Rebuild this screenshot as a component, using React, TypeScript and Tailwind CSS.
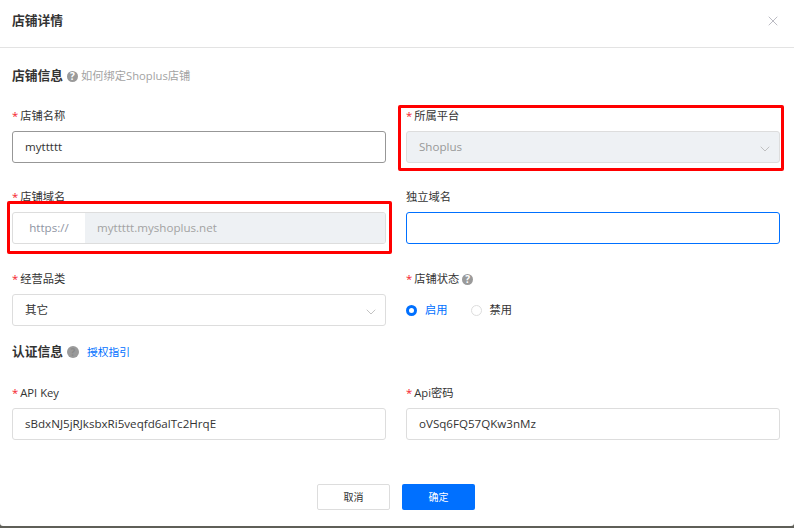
import { ChevronDown, X } from 'lucide-react';

function Req() {
  return <span className="text-[#f5222d] mr-[2px]">*</span>;
}

function Help({ size = 'w-3 h-3', mute = false }: { size?: string; mute?: boolean }) {
  return (
    <span className={`inline-flex items-center justify-center rounded-full bg-[#9a9a9a] text-[10px] font-bold leading-none ${mute ? 'text-[#8a8a8a]' : 'text-white'} ${size}`}>
      ?
    </span>
  );
}

function Field({ label, required = true, className = '', children }: { label: React.ReactNode; required?: boolean; className?: string; children: React.ReactNode }) {
  return (
    <div className={className}>
      <div className="h-[16px] pt-[2px] flex items-center text-[11.25px] leading-4 text-[#333]">
        {required && <Req />}
        {label}
      </div>
      <div className="mt-[8px]">{children}</div>
    </div>
  );
}

function TextBox({ value, className = 'border-[#dddddd]' }: { value?: string; className?: string }) {
  return (
    <div className={`h-8 rounded-[3px] border px-3 flex items-center text-[11.6px] text-[#333] ${className}`}>
      {value}
    </div>
  );
}

function SelectBox({ value, disabled = false }: { value: string; disabled?: boolean }) {
  return (
    <div className={`h-8 rounded-[3px] border border-[#dddddd] px-3 flex items-center justify-between text-[11.6px] ${disabled ? 'bg-[#eef1f4] text-[#999]' : 'text-[#333]'}`}>
      <span>{value}</span>
      <ChevronDown className="w-4 h-4 -mr-[6px] mt-[4px] text-[#b4b4b4]" strokeWidth={1.2} />
    </div>
  );
}

export default function App() {
  return (
    <div
      className="relative w-[794px] h-[528px] bg-[#5f5f58] overflow-hidden"
      style={{ fontFamily: '"Open Sans", "Noto Sans CJK SC", sans-serif' }}
    >
      <div className="h-[526px] bg-white rounded-b-[3px]">
        <div className="h-[48px] border-b border-[#e3e3e3] pl-3 pr-[13px] pb-[5px] flex items-center justify-between">
          <span className="text-[12.75px] font-bold text-[#333]">店铺详情</span>
          <X className="w-4 h-4 text-[#a9a9b4]" strokeWidth={1.2} />
        </div>

        <div className="pl-3 pr-[14px] pt-[19px]">
          <div className="h-[18px] flex items-center">
            <span className="text-[12.75px] font-bold text-[#333]">店铺信息</span>
            <span className="ml-1 flex"><Help size="w-[11px] h-[11px]" /></span>
            <span className="ml-[3px] text-[11.25px] text-[#a3a3a3]">如何绑定Shoplus店铺</span>
          </div>

          <div className="grid grid-cols-2 gap-x-5 gap-y-[25px] mt-[22px]">
            <Field label="店铺名称">
              <TextBox value="myttttt" className="border-[#979797]" />
            </Field>
            <Field label="所属平台">
              <SelectBox value="Shoplus" disabled />
            </Field>
            <Field label="店铺域名">
              <div className="h-8 rounded-[3px] border border-[#dddddd] flex items-center text-[11.6px] overflow-hidden">
                <div className="w-[72px] h-full flex items-center justify-center text-[#8f95a3]">https://</div>
                <div className="flex-1 h-full bg-[#eef1f4] px-3 flex items-center text-[#a3a3a3]">myttttt.myshoplus.net</div>
              </div>
            </Field>
            <Field label="独立域名" required={false}>
              <TextBox className="border-[#0070ff]" />
            </Field>
            <Field label="经营品类" className="mt-px">
              <SelectBox value="其它" />
            </Field>
            <Field className="mt-px" label={<span className="flex items-center">店铺状态<span className="ml-[3px] flex"><Help size="w-[11px] h-[11px]" /></span></span>}>
              <div className="h-8 flex items-center text-[11.25px]">
                <span className="w-[11px] h-[11px] rounded-full border-[3.5px] border-[#0070ff] bg-white" />
                <span className="ml-2 text-[#0070ff]">启用</span>
                <span className="ml-[23px] w-[11px] h-[11px] rounded-full border border-[#dddddd] bg-white" />
                <span className="ml-2 text-[#333]">禁用</span>
              </div>
            </Field>
          </div>

          <div className="h-[18px] flex items-center mt-[17px]">
            <span className="text-[12.75px] font-bold text-[#333]">认证信息</span>
            <span className="ml-1 flex"><Help size="w-[12px] h-[12px]" mute /></span>
            <span className="ml-2 text-[10.75px] text-[#0070ff]">授权指引</span>
          </div>

          <div className="grid grid-cols-2 gap-x-5 mt-[23px]">
            <Field label="API Key">
              <TextBox value="sBdxNJ5jRJksbxRi5veqfd6alTc2HrqE" />
            </Field>
            <Field label="Api密码">
              <TextBox value="oVSq6FQ57QKw3nMz" />
            </Field>
          </div>

          <div className="flex justify-center gap-3 mt-[44px]">
            <button className="w-[73px] h-[26px] rounded-[2px] border border-[#dddddd] text-[10px] text-[#333] bg-white">取消</button>
            <button className="w-[73px] h-[26px] rounded-[2px] bg-[#0070ff] text-[10px] text-white">确定</button>
          </div>
        </div>
      </div>

      {/* annotation boxes drawn on top of the screenshot */}
      <div className="absolute left-[398px] top-[105px] w-[386px] h-[66px] border-[3px] border-[#ff0000] rounded-[2px]" />
      <div className="absolute left-[7px] top-[201px] w-[385px] h-[53px] border-[3px] border-[#ff0000] rounded-[2px]" />
    </div>
  );
}
